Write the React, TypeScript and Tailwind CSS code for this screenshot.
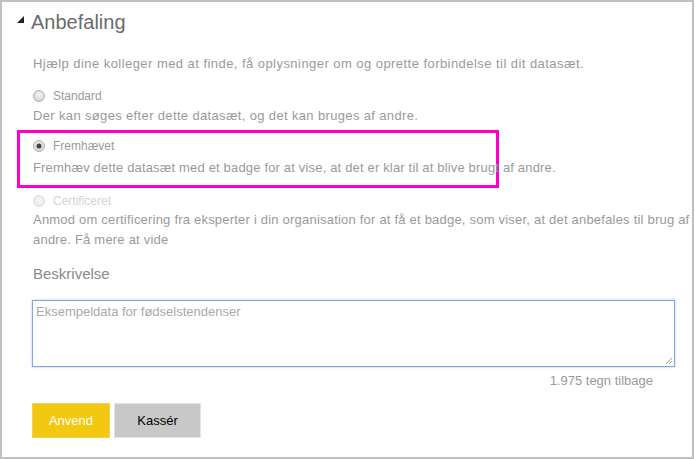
import React from "react";

function Radio({ checked, disabled }: { checked?: boolean; disabled?: boolean }) {
  const id = disabled ? "rgd" : checked ? "rgc" : "rgn";
  return (
    <svg width="12" height="12" viewBox="0 0 12 12" className="shrink-0">
      <defs>
        <radialGradient id={id} cx="50%" cy="40%" r="60%">
          <stop offset="0%" stopColor="#f6f6f6" />
          <stop offset="100%" stopColor={disabled ? "#e8e8e8" : "#d2d2d2"} />
        </radialGradient>
      </defs>
      <circle
        cx="6"
        cy="6"
        r="5.5"
        fill={`url(#${id})`}
        stroke={disabled ? "#dedede" : "#b4b4b4"}
        strokeWidth="1"
      />
      {checked && <circle cx="6" cy="6" r="2.5" fill="#444" />}
    </svg>
  );
}

export default function App() {
  return (
    <div
      className="w-[694px] h-[459px] border-2 border-[#c0c0c0] bg-white text-[#9a9a9a] text-[13px] leading-[16px] overflow-hidden"
      style={{ fontFamily: '"Liberation Sans", Arial, sans-serif' }}
    >
      <div className="flex items-center pl-[15px] h-[40px]">
        <svg width="7" height="7" viewBox="0 0 7 7" className="mt-[-6px]">
          <polygon points="7,0 7,7 0,7" fill="#222" />
        </svg>
        <span className="ml-[7px] text-[20px] text-[#6b6b6b] leading-none">Anbefaling</span>
      </div>

      <div className="pl-[31px] mt-[14px] tracking-[0.45px] whitespace-nowrap">
        Hjælp dine kolleger med at finde, få oplysninger om og oprette forbindelse til dit datasæt.
      </div>

      <div className="pl-[31px] mt-[16px]">
        <div className="flex items-center gap-[8px] h-[16px]">
          <Radio />
          <span className="text-[12px]">Standard</span>
        </div>
        <div className="mt-[4px] tracking-[0.35px] whitespace-nowrap">
          Der kan søges efter dette datasæt, og det kan bruges af andre.
        </div>
      </div>

      <div className="ml-[15px] mt-[6px] w-[482px] h-[58px] border-[3px] border-[#ff00cc] pl-[13px] pt-[5px]">
        <div className="flex items-center gap-[8px] h-[16px]">
          <Radio checked />
          <span className="text-[12px]">Fremhævet</span>
        </div>
        <div className="mt-[6px] tracking-[0.17px] whitespace-nowrap">
          Fremhæv dette datasæt med et badge for at vise, at det er klar til at blive brugt af andre.
        </div>
      </div>

      <div className="pl-[31px] mt-[5px]">
        <div className="flex items-center gap-[8px] h-[16px]">
          <Radio disabled />
          <span className="text-[12px] text-[#d4d4d4]">Certificeret</span>
        </div>
        <div className="mt-[1px] tracking-[0.21px] leading-[20px] whitespace-nowrap">
          Anmod om certificering fra eksperter i din organisation for at få et badge, som viser, at det anbefales til brug af
          <br />
          andre. Få mere at vide
        </div>
      </div>

      <div className="pl-[31px] mt-[16px] text-[15px] text-[#8a8a8a]">Beskrivelse</div>

      <div className="pl-[30px] mt-[18px] pr-[17px]">
        <div className="relative h-[67px] border border-[#7ea8ee] shadow-[0_0_2px_#9fbff5] pt-[3px] pl-[3px] text-[13px] text-[#aaaaaa]">
          Eksempeldata for fødselstendenser
          <svg width="8" height="8" viewBox="0 0 8 8" className="absolute right-[1px] bottom-[1px]">
            <line x1="7" y1="1" x2="1" y2="7" stroke="#999" strokeWidth="1" />
            <line x1="7" y1="4" x2="4" y2="7" stroke="#999" strokeWidth="1" />
          </svg>
        </div>
        <div className="flex justify-end pr-[22px] mt-[6px] text-[13px] text-[#9a9a9a]">
          1.975 tegn tilbage
        </div>
      </div>

      <div className="flex gap-[4px] pl-[30px] mt-[14px]">
        <button className="w-[78px] h-[35px] bg-[#f2c811] text-white text-[13px] border border-[#f0d060]">
          Anvend
        </button>
        <button className="w-[87px] h-[35px] bg-[#c8c8c8] text-black text-[13px] border border-[#e4e4e4]">
          Kassér
        </button>
      </div>
    </div>
  );
}
